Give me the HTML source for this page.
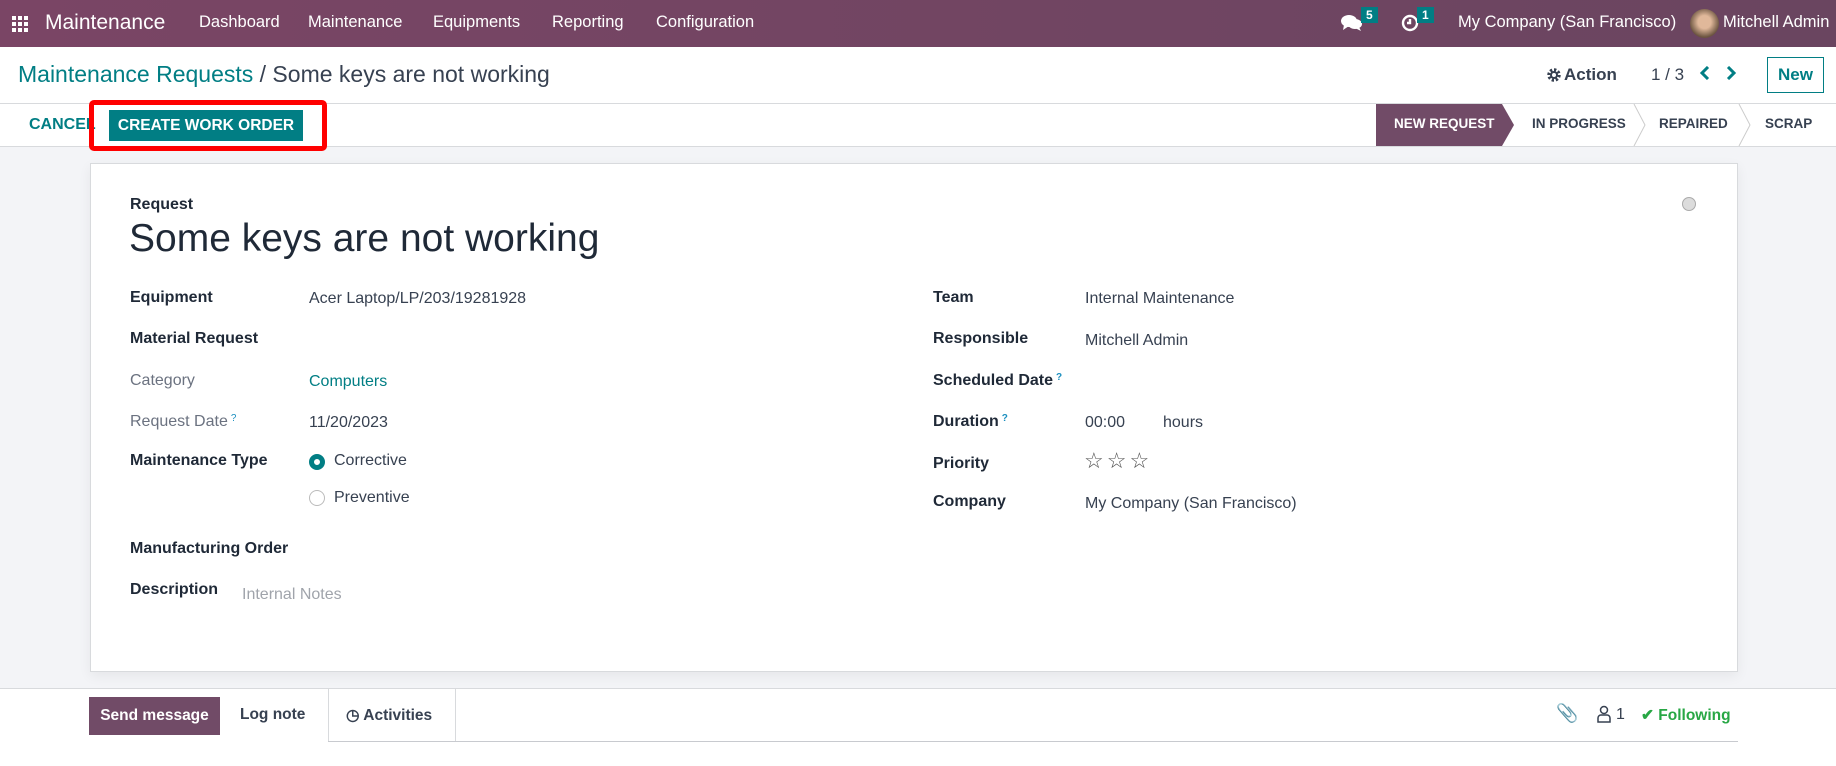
<!DOCTYPE html>
<html><head><meta charset="utf-8"><style>
*{box-sizing:border-box;margin:0;padding:0}
body{width:1836px;height:766px;overflow:hidden;font-family:"Liberation Sans",sans-serif;background:#fff;color:#374151;position:relative}
.a{position:absolute;white-space:nowrap}
.nav{position:absolute;left:0;top:0;width:1836px;height:47px;background:linear-gradient(90deg,#7a4565,#6a4560)}
.nav .a{color:#fff;font-size:16.5px;top:13px}
.lbl{font-size:16px;font-weight:bold;color:#1f2937}
.val{font-size:16px;color:#374151}
.q{color:#1b8fbf;font-size:10px;vertical-align:top;margin-left:3px}
.st{font-size:13.5px;font-weight:bold;color:#374151;top:116px}
</style></head><body>
<div class="nav">
 <svg class="a" style="left:12px;top:16px" width="16" height="16" viewBox="0 0 16 16" fill="#fff"><rect x="0" y="0" width="4" height="4"/><rect x="6" y="0" width="4" height="4"/><rect x="12" y="0" width="4" height="4"/><rect x="0" y="6" width="4" height="4"/><rect x="6" y="6" width="4" height="4"/><rect x="12" y="6" width="4" height="4"/><rect x="0" y="12" width="4" height="4"/><rect x="6" y="12" width="4" height="4"/><rect x="12" y="12" width="4" height="4"/></svg>
 <div class="a" style="left:45px;top:11px;font-size:21px">Maintenance</div>
 <div class="a" style="left:199px">Dashboard</div>
 <div class="a" style="left:308px">Maintenance</div>
 <div class="a" style="left:433px">Equipments</div>
 <div class="a" style="left:552px">Reporting</div>
 <div class="a" style="left:656px">Configuration</div>
 <svg class="a" style="left:1341px;top:14px" width="22" height="18" viewBox="0 0 22 18" fill="#fff"><ellipse cx="8" cy="7" rx="8" ry="6"/><path d="M3 11 L2 16 L8 12Z"/><ellipse cx="14" cy="10" rx="7" ry="5"/><path d="M18 13 L20 17 L14 14Z"/></svg>
 <div class="a" style="left:1361px;top:7px;background:#017e84;font-size:12px;padding:1px 5px;font-weight:bold">5</div>
 <svg class="a" style="left:1401px;top:14px" width="18" height="18" viewBox="0 0 18 18" fill="none" stroke="#fff" stroke-width="2.4"><circle cx="9" cy="9" r="7"/><path d="M9 5v4h-3"/></svg>
 <div class="a" style="left:1417px;top:7px;background:#017e84;font-size:12px;padding:1px 5px;font-weight:bold">1</div>
 <div class="a" style="left:1458px">My Company (San Francisco)</div>
 <div class="a" style="left:1690px;top:9px;width:29px;height:29px;border-radius:50%;background:radial-gradient(circle at 50% 45%,#e0b89a 30%,#6b5440 70%)"></div>
 <div class="a" style="left:1723px">Mitchell Admin</div>
</div>
<div class="a" style="left:18px;top:61px;font-size:23px;color:#017e84">Maintenance Requests <span style="color:#374151">/ Some keys are not working</span></div>
<svg class="a" style="left:1546px;top:67px" width="16" height="16" viewBox="0 0 16 16"><circle cx="8" cy="8" r="5" fill="none" stroke="#374151" stroke-width="3.5" stroke-dasharray="2.2 1.7"/><circle cx="8" cy="8" r="4" fill="#374151"/><circle cx="8" cy="8" r="2" fill="#fff"/></svg>
<div class="a" style="left:1564px;top:65px;font-size:17px;font-weight:bold;color:#374151">Action</div>
<div class="a" style="left:1651px;top:65px;font-size:17px;color:#374151">1 / 3</div>
<svg class="a" style="left:1699px;top:66px" width="12" height="14" viewBox="0 0 12 14" fill="none" stroke="#017e84" stroke-width="3"><path d="M9 1L3 7L9 13"/></svg>
<svg class="a" style="left:1725px;top:66px" width="12" height="14" viewBox="0 0 12 14" fill="none" stroke="#017e84" stroke-width="3"><path d="M3 1L9 7L3 13"/></svg>
<div class="a" style="left:1767px;top:57px;width:57px;height:36px;border:1px solid #017e84;color:#017e84;font-size:17px;font-weight:bold;text-align:center;line-height:34px">New</div>
<div class="a" style="left:0;top:103px;width:1836px;height:1px;background:#d8dadd"></div>
<div class="a" style="left:0;top:146px;width:1836px;height:620px;background:#f3f4f7;border-top:1px solid #d8dadd"></div>
<div class="a" style="left:29px;top:116px;font-size:16px;font-weight:bold;color:#017e84">CANCEL</div>
<div class="a" style="left:89px;top:100px;width:238px;height:51px;border:5px solid #f00;border-radius:5px"></div>
<div class="a" style="left:109px;top:110px;width:194px;height:31px;background:#017e84;color:#fff;font-size:15.5px;font-weight:bold;text-align:center;line-height:31px">CREATE WORK ORDER</div>
<svg class="a" style="left:1376px;top:104px" width="460" height="42"><path d="M0 0H126L138 21L126 42H0Z" fill="#714b67"/><path d="M258 0L269 21L258 42M363 0L374 21L363 42" fill="none" stroke="#ccc"/></svg>
<div class="a st" style="left:1394px;color:#fff">NEW REQUEST</div>
<div class="a st" style="left:1532px">IN PROGRESS</div>
<div class="a st" style="left:1659px">REPAIRED</div>
<div class="a st" style="left:1765px">SCRAP</div>
<div class="a" style="left:90px;top:163px;width:1648px;height:509px;background:#fff;border:1px solid #d8dadd;box-shadow:0 4px 12px rgba(0,0,0,.06)"></div>
<div class="a" style="left:1682px;top:197px;width:14px;height:14px;border-radius:50%;background:#dcdcdc;border:1px solid #aaa"></div>
<div class="a lbl" style="left:130px;top:196px">Request</div>
<div class="a" style="left:129px;top:217px;font-size:39px;color:#1f2937">Some keys are not working</div>
<div class="a lbl" style="left:130px;top:289px">Equipment</div><div class="a val" style="left:309px;top:290px">Acer Laptop/LP/203/19281928</div>
<div class="a lbl" style="left:130px;top:330px">Material Request</div>
<div class="a val" style="left:130px;top:372px;color:#6b7280">Category</div><div class="a val" style="left:309px;top:373px;color:#017e84">Computers</div>
<div class="a val" style="left:130px;top:413px;color:#6b7280">Request Date<span class="q">?</span></div><div class="a val" style="left:309px;top:414px">11/20/2023</div>
<div class="a lbl" style="left:130px;top:452px">Maintenance Type</div>
<div class="a" style="left:309px;top:454px;width:16px;height:16px;border-radius:50%;border:5px solid #017e84"></div><div class="a val" style="left:334px;top:452px">Corrective</div>
<div class="a" style="left:309px;top:490px;width:16px;height:16px;border-radius:50%;border:1px solid #bbb"></div><div class="a val" style="left:334px;top:489px">Preventive</div>
<div class="a lbl" style="left:130px;top:540px">Manufacturing Order</div>
<div class="a lbl" style="left:130px;top:581px">Description</div><div class="a val" style="left:242px;top:586px;color:#a0a4ab">Internal Notes</div>
<div class="a lbl" style="left:933px;top:289px">Team</div><div class="a val" style="left:1085px;top:290px">Internal Maintenance</div>
<div class="a lbl" style="left:933px;top:330px">Responsible</div><div class="a val" style="left:1085px;top:332px">Mitchell Admin</div>
<div class="a lbl" style="left:933px;top:372px">Scheduled Date<span class="q">?</span></div>
<div class="a lbl" style="left:933px;top:413px">Duration<span class="q">?</span></div><div class="a val" style="left:1085px;top:414px">00:00</div><div class="a val" style="left:1163px;top:414px">hours</div>
<div class="a lbl" style="left:933px;top:455px">Priority</div>
<div class="a" style="left:1084px;top:448px;font-size:22px;color:#555;letter-spacing:3px">☆☆☆</div>
<div class="a lbl" style="left:933px;top:493px">Company</div><div class="a val" style="left:1085px;top:495px">My Company (San Francisco)</div>
<div class="a" style="left:0;top:688px;width:1836px;height:78px;background:#fff;border-top:1px solid #d8dadd"></div>
<div class="a" style="left:89px;top:697px;width:131px;height:38px;background:#714b67;color:#fff;font-size:15.5px;font-weight:bold;text-align:center;line-height:38px">Send message</div>
<div class="a" style="left:240px;top:706px;font-size:15.5px;font-weight:bold;color:#374151">Log note</div>
<div class="a" style="left:328px;top:689px;width:128px;height:52px;border-left:1px solid #d8dadd;border-right:1px solid #d8dadd"></div>
<div class="a" style="left:346px;top:706px;font-size:15.5px;font-weight:bold;color:#374151">&#9719; Activities</div>
<div class="a" style="left:328px;top:741px;width:1410px;height:1px;background:#c8cacf"></div>
<div class="a" style="left:1556px;top:703px;font-size:18px;color:#374151">&#128206;</div>
<svg class="a" style="left:1597px;top:705px" width="14" height="18" viewBox="0 0 14 18" fill="none" stroke="#374151" stroke-width="1.5"><circle cx="7" cy="5" r="3.5"/><path d="M1 17V13a3 3 0 013-3h6a3 3 0 013 3v4Z"/></svg>
<div class="a" style="left:1616px;top:706px;font-size:16px;color:#374151">1</div>
<div class="a" style="left:1641px;top:706px;font-size:15.5px;font-weight:bold;color:#28a745">&#10004; Following</div>
</body></html>
